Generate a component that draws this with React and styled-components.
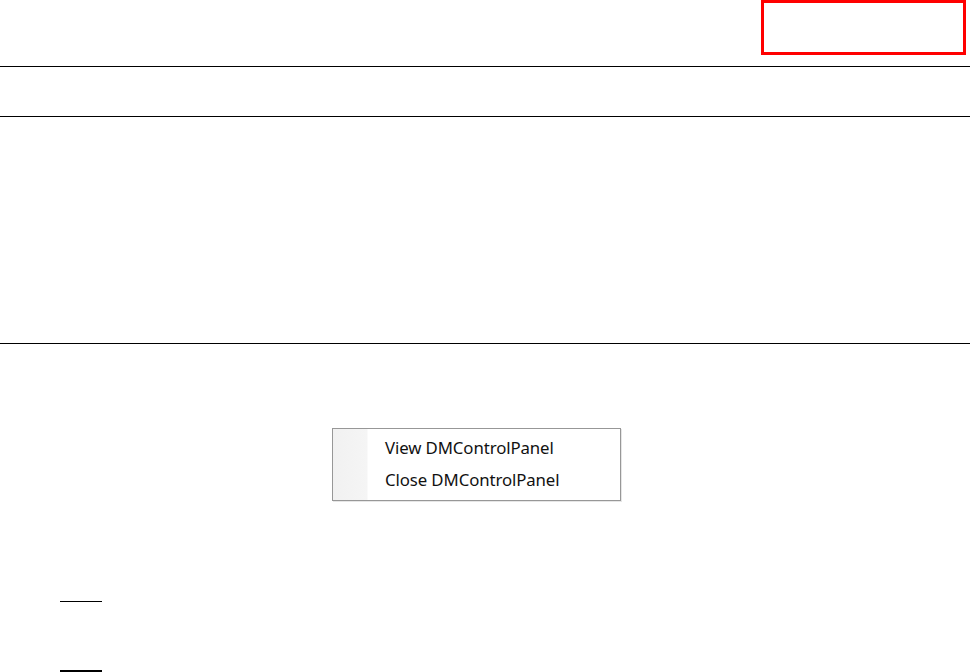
import React from 'react';
import styled, { createGlobalStyle } from 'styled-components';

const GlobalStyle = createGlobalStyle`
    html, body {
        margin: 0;
        padding: 0;
        background: #ffffff;
    }
    body {
        font-family: "Noto Sans", "Open Sans", sans-serif;
    }
`;

const Page = styled.div`
    width: 970px;
    height: 672px;
    overflow: hidden;
    display: flex;
    flex-direction: column;
`;

const Header = styled.header`
    height: 66px;
    display: flex;
    justify-content: flex-end;
    align-items: flex-start;
    padding-right: 4px;
    box-sizing: border-box;
`;

const Highlight = styled.div`
    width: 205px;
    height: 55px;
    border: 3px solid #ff0000;
    box-sizing: border-box;
`;

const Rule = styled.hr`
    margin: 0;
    margin-top: ${(props) => props.gap || 0}px;
    border: none;
    height: ${(props) => props.thick || 1}px;
    width: ${(props) => props.width ? props.width + 'px' : '100%'};
    margin-left: ${(props) => props.indent || 0}px;
    background: #000000;
    flex-shrink: 0;
`;

const MenuWrap = styled.div`
    margin-top: 84px;
    padding-left: 332px;
`;

const Menu = styled.ul`
    list-style: none;
    margin: 0;
    padding: 3px 2px 3px 0;
    width: 289px;
    height: 73px;
    box-sizing: border-box;
    border: 1px solid #979797;
    background: linear-gradient(to right, #f1f1f1 0, #f5f5f5 34px, #ffffff 35px);
    box-shadow: 1px 1px 0 #e6e6e6;
`;

const MenuItem = styled.li`
    height: 32px;
    line-height: 32px;
    padding-left: 52px;
    font-size: 16.8px;
    letter-spacing: -0.1px;
    color: #111111;
    white-space: nowrap;
`;

const App = () => {
    return (
        <Page>
            <GlobalStyle />
            <Header>
                <Highlight />
            </Header>
            <Rule />
            <Rule gap={49} />
            <Rule gap={226} />
            <MenuWrap>
                <Menu>
                    <MenuItem>View DMControlPanel</MenuItem>
                    <MenuItem>Close DMControlPanel</MenuItem>
                </Menu>
            </MenuWrap>
            <Rule gap={100} width={42} indent={60} />
            <Rule gap={68} width={42} indent={60} thick={2} />
        </Page>
    );
};

export default App;
